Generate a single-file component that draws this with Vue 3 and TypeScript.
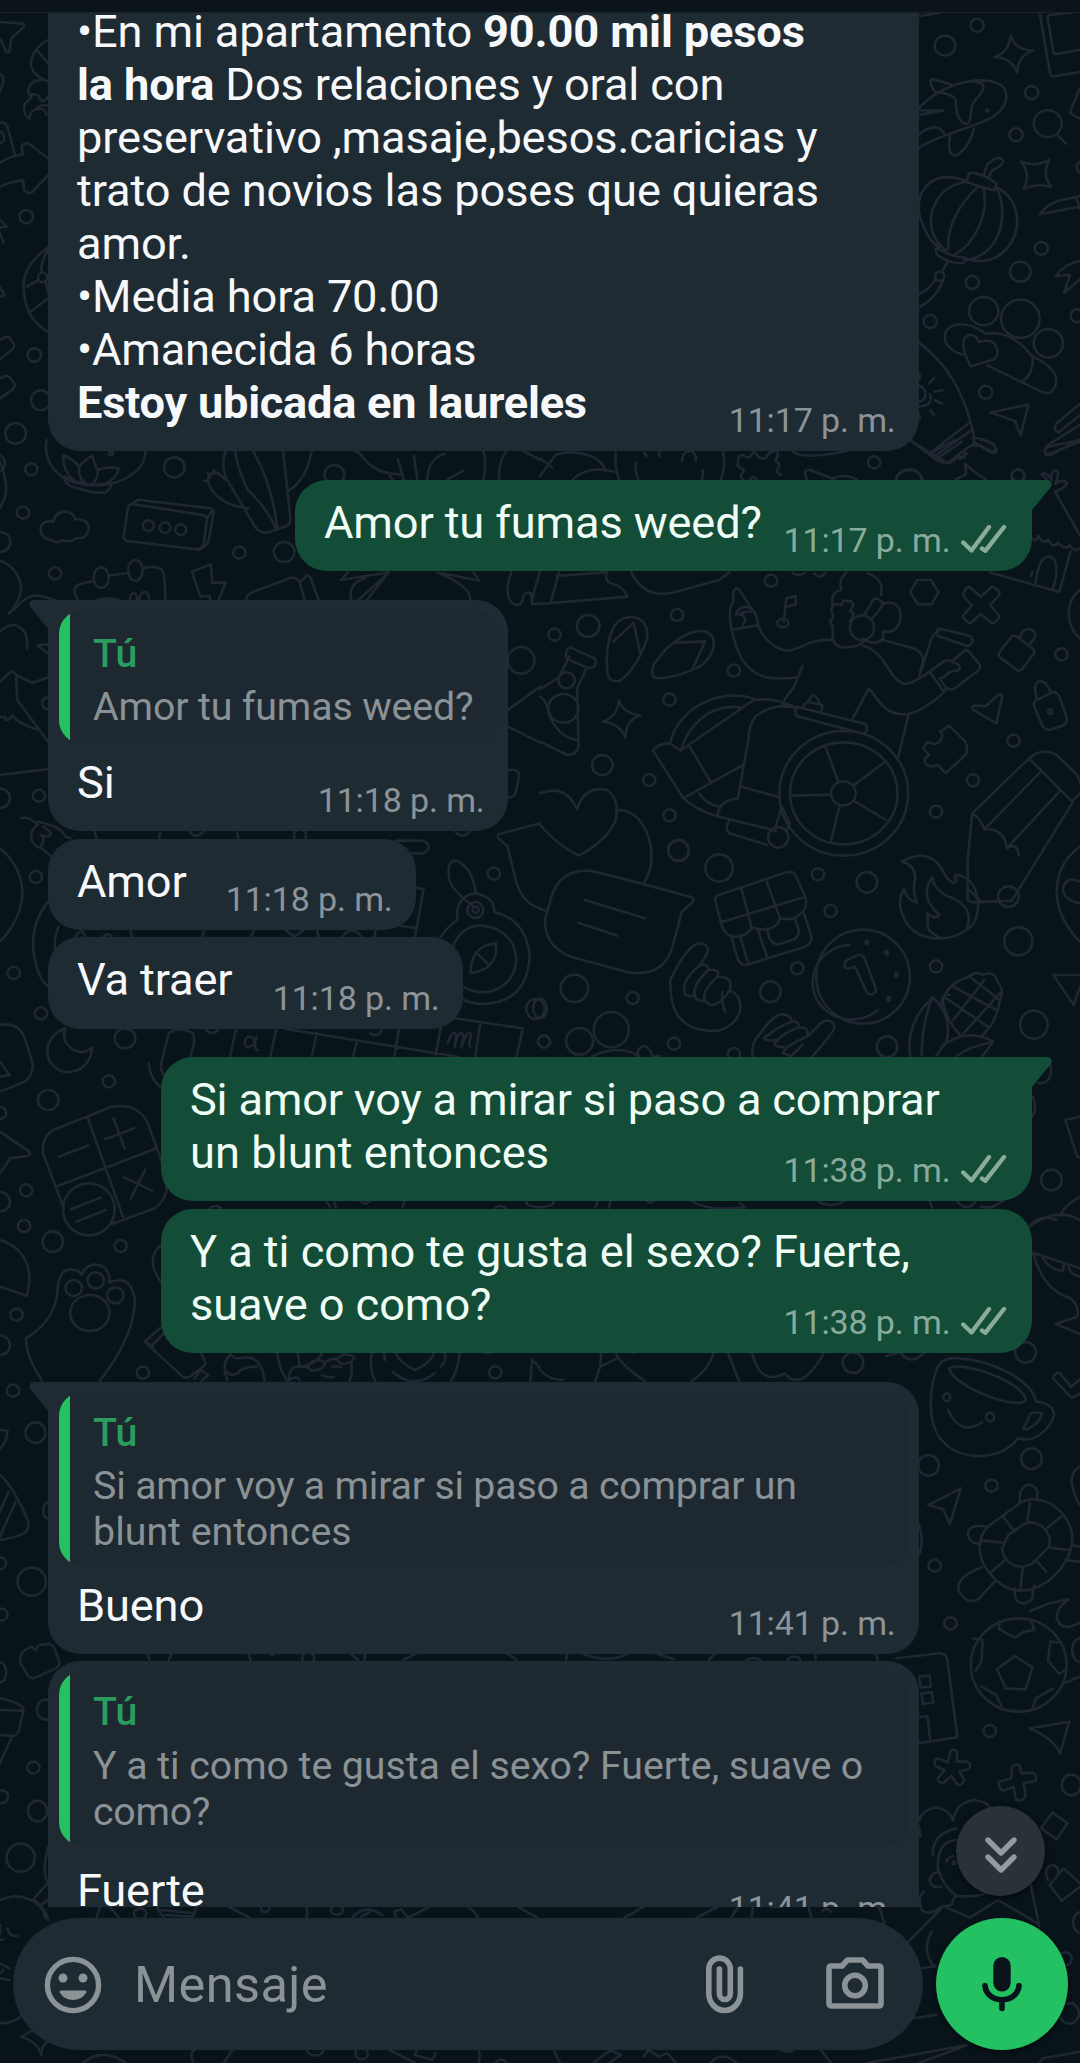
<script setup lang="ts">
interface Line {
  html: string
  spacing: number
}

interface Message {
  id: number
  side: 'in' | 'out'
  lines: Line[]
  time: string
  width: number
  tail?: boolean
  first?: boolean
  quote?: Line[]
  short?: boolean
  low?: boolean
}

interface Doodle {
  transform: string
  paths: string[]
  circles: number[][]
}

const line = (html: string, spacing = -0.14): Line => ({ html, spacing })

const messages: Message[] = [
  {
    id: 1,
    side: 'in',
    first: true,
    width: 871,
    time: '11:17 p. m.',
    lines: [
      line('•En mi apartamento <b>90.00 mil pesos</b>', -0.16),
      line('<b>la hora</b> Dos relaciones y oral con', -0.13),
      line('preservativo ,masaje,besos.caricias y'),
      line('trato de novios las poses que quieras', -0.11),
      line('amor.'),
      line('•Media hora 70.00', -0.16),
      line('•Amanecida 6 horas', -0.22),
      line('<b>Estoy ubicada en laureles</b>', -0.26),
    ],
  },
  { id: 2, side: 'out', tail: true, width: 737, lines: [line('Amor tu fumas weed?')], time: '11:17 p. m.' },
  { id: 3, side: 'in', tail: true, short: true, width: 460, quote: [line('Amor tu fumas weed?')], lines: [line('Si')], time: '11:18 p. m.' },
  { id: 4, side: 'in', width: 368, lines: [line('Amor')], time: '11:18 p. m.' },
  { id: 5, side: 'in', width: 415, lines: [line('Va traer')], time: '11:18 p. m.' },
  {
    id: 6,
    side: 'out',
    tail: true,
    width: 871,
    lines: [line('Si amor voy a mirar si paso a comprar', -0.21), line('un blunt entonces', 0.05)],
    time: '11:38 p. m.',
  },
  {
    id: 7,
    side: 'out',
    width: 871,
    lines: [line('Y a ti como te gusta el sexo? Fuerte,', -0.07), line('suave o como?', -0.08)],
    time: '11:38 p. m.',
  },
  {
    id: 8,
    side: 'in',
    tail: true,
    width: 871,
    quote: [line('Si amor voy a mirar si paso a comprar un', -0.2), line('blunt entonces', 0)],
    lines: [line('Bueno')],
    time: '11:41 p. m.',
  },
  {
    id: 9,
    side: 'in',
    low: true,
    width: 871,
    quote: [line('Y a ti como te gusta el sexo? Fuerte, suave o', -0.06), line('como?', -0.3)],
    lines: [line('Fuerte')],
    time: '11:41 p. m.',
  },
]

const doodles: Doodle[] = [
  {
    transform: 'translate(900 0) scale(.33333 .38265)',
    paths: [
      'M58 42L115 34M418 30L450 190Q452 202 465 199L540 188M540 30L448 40Q442 41 443 48L460 135Q462 143 470 141L540 130',
      'M333 92Q342 130 399 132Q355 145 351 189Q336 152 284 149Q325 138 333 92Z',
      'M58 282C110 230 200 205 262 211C335 218 335 270 280 305C230 332 120 350 58 386M105 240Q80 205 100 207L160 222M105 240Q160 245 168 262C165 310 190 328 205 322C218 310 205 285 225 262Q262 228 245 218Q230 212 222 214M58 288L130 289L58 300M58 350Q110 315 135 352M150 352Q140 410 168 406Q205 390 222 336',
      'M472 352L499 376M540 230L512 288Q510 297 518 300L540 310',
      'M363 422Q408 438 448 417Q424 455 454 488Q410 478 371 494Q394 455 363 422Z',
      'M205 475C80 430 30 520 70 590C85 625 105 640 118 645M290 490C360 520 370 600 320 650C280 690 230 685 195 675M205 475C110 480 70 570 105 620Q115 640 140 655M235 487C180 530 140 590 145 650M250 490C270 560 220 640 165 665M290 492C330 560 300 670 195 680M198 475L208 452Q245 450 290 480L282 497Q240 490 198 475ZM110 648Q105 655 112 667Q150 690 190 688L195 674Q150 670 110 648ZM250 460L262 430Q300 400 310 422Q302 437 276 445L266 464M142 686L126 710M130 732Q110 780 58 802M108 728Q90 755 58 768',
      'M540 512L500 520Q450 525 418 560L540 540M530 520L540 545M540 682Q490 690 468 722L510 718L492 766L540 730',
      'M196 928C150 920 125 895 138 865C160 840 205 842 250 868M255 872C300 865 350 880 395 930C455 955 480 980 465 1010C455 1030 440 1030 420 1022L262 955M398 934Q400 980 365 998M212 957Q195 930 190 905Q190 875 212 875Q232 878 236 894Q270 885 285 900Q302 925 280 940Z',
      'M272 1078L385 1057L362 1137L345 1100Z',
      'M58 896C140 950 190 1020 220 1130L222 1158L150 1205Q135 1213 110 1203L30 1150M88 1185L208 1105M100 1195L218 1122M222 1145Q240 1142 280 1160Q295 1180 285 1183L240 1165L220 1165M172 1192L180 1200L196 1188L192 1180M58 1008Q80 1015 76 1035Q70 1050 58 1048M90 1030Q100 1060 60 1062M88 1002L102 988M104 1024L128 1020M104 1046L126 1054M90 1072L102 1084M60 978L60 990M58 1084L60 1096',
      'M540 1055L468 1108Q460 1125 475 1130L540 1085M540 1110L440 1165Q428 1180 442 1188Q450 1190 458 1186L540 1148',
      'M168 1252L198 1240L196 1212Q215 1230 256 1252',
      'M440 1252Q420 1240 428 1237Q445 1236 455 1255Q450 1230 470 1230Q480 1238 465 1265Q485 1250 502 1262Q495 1275 465 1285L540 1400M396 1408Q410 1418 414 1400Q430 1425 445 1410Q460 1435 475 1418Q495 1440 508 1425Q525 1445 540 1432M512 1440L478 1547L270 1496M406 1530Q415 1450 450 1455Q485 1465 458 1540',
    ],
    circles: [[135,119,31,26],[231,66,20,17],[395,242,20,17],[443,323,42,35],[348,352,20,17],[424,649,20,17],[361,710,31,26],[217,738,20,17],[119,722,14,12],[91,840,20,17],[251,813,44,37],[361,833,58,50],[445,897,44,37],[257,1025,20,17],[354,1244,20,17],[28,1262,42,34],[530,825,18,17],[262,289,3,3],[550,437,20,17]],
  },
  {
    transform: 'translate(0 0) scale(.33333)',
    paths: [
      'M0 66L68 71Q78 77 68 84L34 115L28 155Q20 158 17 152L0 115M145 120Q100 140 92 190Q95 225 145 245M110 150L145 190M137 240Q90 235 84 275Q90 290 98 283Q90 300 75 310Q65 340 88 357Q90 335 105 328Q135 320 140 345M145 290Q130 310 120 298Q118 280 95 282M145 318Q120 310 105 330',
      'M0 222Q15 230 8 250L0 275M0 368Q15 365 22 378L45 466M0 395Q15 400 12 422L0 430',
      'M0 488Q30 468 68 464L65 438Q75 425 90 433L145 476M0 560Q35 543 70 542L72 570Q85 585 98 575L145 525',
      'M0 660L20 680L0 683M0 700L12 728M0 862L14 885L0 890',
      'M145 742Q60 800 72 880Q80 960 145 996M145 750Q120 790 125 815M80 860L113 842M137 845L145 880M92 935L130 905M145 895L130 905',
      'M0 1020L15 1012Q25 1008 32 1018L42 1032Q45 1042 35 1050L0 1078M0 1135L15 1128Q25 1126 32 1136L44 1152Q45 1162 38 1168L0 1195',
    ],
    circles: [[79,650,20,20],[128,832,14,14],[103,1065,20,20],[122,1201,29,30],[47,1300,31,31],[-6,1390,20,25]],
  },
  {
    transform: 'translate(0 440) scale(.34439 .33333)',
    paths: [
      'M135 0C125 60 160 100 195 120C260 145 330 142 380 105C420 80 425 50 423 0M183 45Q210 55 230 80M183 45Q185 100 215 120M230 80Q245 60 268 47Q275 75 284 90Q310 78 345 85Q340 115 308 130M230 80Q225 115 250 130M284 90Q285 115 270 130M188 110L190 125Q200 140 230 146Q270 160 300 158Q315 155 322 138M188 110Q240 140 305 132',
      'M0 65Q25 130 15 170L0 205M25 520L50 500Q80 460 120 468L160 480M0 362Q50 380 62 440Q60 480 28 520M0 575Q30 545 55 560Q85 580 78 625M0 725L33 693Q60 715 95 728L140 712M47 710L50 780L140 905M0 830Q10 835 15 830L18 840Q30 840 35 825Q50 850 105 868M140 613L108 616L140 640M0 1005L140 987',
      'M150 300Q115 295 118 262Q125 240 155 245Q160 215 190 214Q215 220 218 238Q255 235 258 265Q252 300 222 294Q205 310 180 300Q165 315 150 300Z',
      'M372 200Q375 192 385 192L588 225Q605 230 600 245L592 310Q585 330 570 328L370 303Q355 298 360 285L372 200M380 195L400 180Q410 178 425 182L612 205Q622 210 620 222L605 305Q595 325 575 330M600 235L618 212',
      'M655 33Q640 80 660 120L740 260Q755 280 775 278L832 258Q845 250 843 235L822 30M683 33Q690 90 720 150M720 150Q780 210 803 270M735 33Q790 130 805 265M905 33Q890 120 838 152M720 205C650 200 600 150 605 115M605 115Q610 95 625 97Q645 105 655 120M592 122L605 124M603 100L612 112M620 90L622 102',
      'M225 480Q210 450 222 438Q235 428 270 425M315 408L372 398M415 385Q455 375 470 390Q480 400 480 480M378 480Q375 462 390 460Q400 465 398 480M405 480Q405 458 420 455Q435 460 433 480M280 480Q310 470 345 480',
      'M557 395L612 373L616 428L655 428L635 480M557 395L582 470L608 468L610 478M715 480Q715 465 730 458L840 415Q860 408 870 428L885 480M870 428L892 405Q902 410 906 425L925 480M990 420L1130 397M990 420L1010 397M1125 402L1040 480M1020 480Q1010 430 1060 415M1115 415Q1080 460 1065 480M1270 397Q1370 440 1365 480M1285 400L1392 422L1375 397M1485 397Q1465 450 1480 480Q1490 500 1512 493Q1520 480 1520 465Q1530 455 1542 460L1545 492L1568 490M1568 397Q1550 450 1545 485',
      'M1040 38L1030 33M1040 33Q1075 90 1130 100L1170 105M1125 97L1140 118M1155 58L1172 118M1202 48L1212 118M1240 118Q1245 55 1290 42M1300 118L1345 92M1403 33Q1415 70 1403 118M1450 118Q1445 70 1470 33M1520 33L1568 60',
      'M1475 810L1568 740M1475 860L1568 907M1475 990Q1510 985 1507 1010L1497 1060Q1490 1072 1475 1073M60 1135Q80 1125 110 1155M110 1155Q85 1170 92 1200Q105 1225 115 1222Q135 1200 120 1185Q145 1195 148 1180Q135 1165 125 1160M110 1145Q180 1160 190 1190L205 1195M120 1225L150 1250M275 1176L280 1195M465 1176L462 1195M688 1176L692 1195M1150 1202L1225 1202Q1245 1205 1245 1222Q1240 1238 1225 1240L1185 1240M1568 1150L1450 1182Q1440 1188 1450 1198L1475 1220',
    ],
    circles: [[91,88,18,18],[506,82,30,30],[67,218,18,18],[0,306,30,30],[431,257,16,16],[479,263,16,16],[525,269,16,16],[695,338,18,18],[825,336,30,30],[160,400,18,18],[294,413,22,31],[393,391,21,31],[322,40,6,6],[971,104,29,29],[1513,661,39,40],[140,790,18,18],[0,1075,29,29],[113,1067,18,18],[570,1165,22,22],[871,1186,18,18],[1343,1165,22,22]],
  },
  {
    transform: 'translate(540 440) scale(.34439 .33333)',
    paths: [
      'M0 55L35 82M0 108L45 45Q75 33 100 38Q180 45 190 95M95 118Q140 75 215 95M220 33Q215 80 230 118M278 68Q275 95 285 118M473 90Q475 105 470 118M531 33Q540 80 525 118M302 38L310 48M345 33L347 50M412 62Q415 30 440 33Q455 45 452 62',
      'M575 80Q570 45 590 45Q600 55 610 50Q620 30 628 40Q635 60 655 55Q665 30 688 33Q695 50 682 58Q700 75 692 85Q680 95 700 105M575 80Q590 85 592 95Q575 110 590 118M610 118Q620 105 630 118M735 35Q760 60 895 33M775 118Q760 85 785 90L855 118M850 115Q885 100 920 118',
      'M1080 5L1185 70Q1210 60 1220 40M1205 0L1130 43M1225 5L1150 58M1218 50L1230 52L1240 40M1262 8L1310 38Q1325 40 1320 18Q1300 0 1280 0M1568 0L1475 20Q1460 30 1470 45L1568 5',
      'M55 397L32 485M0 492L253 470Q245 440 205 430Q185 420 195 397M48 408L190 397M265 397C290 450 330 470 385 458L520 420L550 397M735 400Q750 410 770 398M795 400Q815 420 830 397',
      'M196 700C190 640 200 590 215 560C240 515 315 520 312 590C300 640 265 700 232 722Q200 728 196 700ZM213 605L272 548L290 635',
      'M328 710Q320 680 340 660C380 600 440 570 475 573C520 585 510 640 470 675C430 700 350 725 328 710ZM395 608L480 604L445 682',
      'M0 748L55 712L85 650M78 655Q70 630 88 622L158 655Q168 670 155 682Q145 690 78 655M135 685L108 745L112 920Q105 945 80 945L0 905M0 770Q20 780 25 820Q50 890 108 900',
      'M229 780Q240 820 291 826Q250 840 248 892Q230 850 183 845Q225 830 229 780Z',
      'M556 570L632 556M556 570Q545 500 560 490L562 455Q570 435 582 455L608 497Q630 520 634 558Q660 620 715 632C760 632 770 595 855 600M558 575C570 630 590 690 650 710Q690 720 748 712M762 678Q750 710 735 745Q710 775 705 792M570 525Q570 505 595 500Q620 505 612 515Q590 515 578 523Q600 525 595 545Q588 550 590 558',
      'M708 545L715 475L742 468L743 492L718 500M850 600L850 560L842 545L852 530L845 510L855 492L875 495L880 482L905 485L910 495L900 515L912 520L900 545M850 500Q840 455 875 450Q865 420 890 397M950 400Q1000 415 990 465M850 600Q860 625 890 622Q920 622 940 605M942 525L970 475Q985 475 998 492L962 540M998 490Q1045 480 1048 530Q1040 580 998 575M995 575Q1005 605 970 608Q945 605 938 595L932 615M940 618C1010 640 1010 720 1060 732Q1080 732 1132 695M995 600L1085 625Q1115 640 1112 660L1102 705M1108 690L1135 600Q1145 575 1158 575',
      'M1155 568Q1148 580 1155 587L1240 618Q1250 618 1257 602Q1255 592 1250 588L1165 567Q1160 566 1155 568ZM1195 665L1232 632Q1240 628 1245 635L1278 675Q1280 685 1272 692L1205 745Q1195 752 1185 745L1170 752L1132 695L1175 662Q1190 658 1215 675Q1225 685 1210 693Q1190 690 1175 710L1160 715L1182 748M1175 755Q1120 810 1070 822C1000 830 985 780 955 745L908 835M1070 825L1038 960',
      'M1095 420L1135 420L1157 456L1137 493L1097 493L1075 456Z',
      'M1232 455Q1235 445 1247 440L1280 470L1312 440Q1325 442 1334 458Q1335 465 1330 470L1307 495L1334 528Q1330 545 1312 550L1280 522L1250 550Q1235 545 1228 528L1255 495Q1220 465 1232 455Z',
      'M1430 397L1425 408M1385 590L1430 625Q1440 632 1433 642L1402 685Q1395 695 1385 690L1335 652Q1328 645 1335 635L1365 595Q1372 582 1385 590ZM1395 590Q1400 565 1425 568Q1445 580 1435 595L1420 615M1332 818L1325 850L1258 810Q1250 800 1260 797L1295 798L1330 765Q1340 760 1342 770Z',
      'M1435 800Q1430 785 1445 778L1488 757Q1500 755 1508 770L1530 835Q1530 850 1520 856L1480 870Q1465 870 1458 855ZM1442 775Q1430 730 1450 724Q1470 720 1482 755',
      'M1568 450Q1535 475 1535 525Q1540 575 1568 595M1188 857L1235 905Q1245 930 1235 945L1178 1000L1155 975Q1135 985 1120 972Q1112 955 1130 945L1113 925L1125 905Q1145 918 1160 905Q1175 885 1162 875Z',
      'M1255 1120L1420 955Q1460 920 1500 945L1555 1000Q1568 1015 1568 1030M1420 955L1545 1085L1568 1060M1255 1120L1242 1255L1242 1380Q1245 1385 1255 1387L1370 1382L1545 1090M1255 1120Q1280 1135 1290 1168L1452 997M1290 1168Q1350 1165 1355 1225L1508 1055M1355 1225Q1385 1205 1390 1245M1242 1345L1280 1385',
      'M0 1060Q75 1030 107 1108Q130 1035 195 1050Q235 1080 218 1145Q190 1205 113 1247Q50 1215 0 1155M225 1110Q300 1110 322 1220Q330 1290 300 1330',
      'M378 910C400 800 530 740 625 778M408 932C430 860 490 790 580 802M620 780Q680 770 740 802L705 792M435 912L620 780M740 802Q670 790 625 830Q605 860 605 900L590 985L575 1075M328 932Q350 905 380 912L408 932L432 915L498 1030M328 932L415 1072Q450 1110 520 1130L685 1172M415 1075L590 975M462 1060Q480 1090 520 1100M515 1130Q520 1080 575 1075M585 1040L695 1072M745 800L945 852Q955 870 942 882L745 828Q738 815 745 800ZM765 798L775 785L820 795L818 812M780 785Q795 745 812 790M685 1158L702 1100L725 1150L715 1175M660 1215L550 1180Q535 1165 548 1145',
      'M828 918L865 1022M998 968L912 1035M1005 1140L915 1085M845 1202L870 1098M728 1067L842 1064',
    ],
    circles: [[970,67,18,18],[1388,106,18,17],[42,584,18,18],[140,558,33,33],[398,525,18,18],[671,422,18,18],[1072,118,36,30],[563,692,18,18],[376,779,18,18],[77,721,24,24],[68,805,44,43],[181,975,30,30],[317,1020,18,18],[376,1126,18,18],[705,549,16,12],[935,563,35,37],[881,1060,36,36],[882,1060,156,153],[882,1060,187,187],[692,1192,29,31],[1375,902,18,18],[1257,1021,18,18],[1150,1115,18,18],[1514,643,18,18],[1482,815,6,7],[402,1232,30,31]],
  },
  {
    transform: 'translate(0 820) scale(.34439 .33333)',
    paths: [
      'M0 85Q65 140 65 225Q60 300 0 365M140 245Q90 310 97 390Q105 470 140 500M170 320Q155 360 160 385M380 331L382 350M592 331L588 350M738 331L728 350M830 331L855 350L880 331M920 331L925 350M1090 331L1088 350M1205 203L1230 207L1205 350M1165 318L1208 325M220 350Q225 335 240 335L248 350M300 350Q310 335 325 350',
      'M1305 180Q1295 120 1325 122Q1370 140 1382 218M1305 180Q1315 215 1380 262M1328 300Q1320 230 1380 220Q1435 230 1435 275Q1530 300 1538 410Q1530 550 1400 552Q1360 550 1340 535M1328 300Q1300 320 1280 350M1315 380Q1340 315 1400 317C1530 330 1530 500 1410 517Q1370 517 1345 500M1440 370C1380 375 1365 420 1367 460C1425 450 1445 420 1440 370ZM1385 400L1420 435M1475 85L1500 190Q1520 250 1568 265',
      'M0 615Q50 605 70 650L95 730Q95 780 60 790L0 815M0 725L28 765L0 770M190 625C120 650 120 740 190 757Q260 755 268 682Q245 705 215 690Q175 665 190 625ZM472 805Q435 780 432 730M475 765Q465 750 468 730L490 640Q520 615 560 640Q570 665 552 710M685 627L668 710M802 627L785 710M830 627L1330 710M920 640L905 710M1038 660L1025 710M1158 627L1145 710M1280 620L1265 705M1395 605L1380 710M1320 595L1518 625L1500 710',
      'M740 660Q715 635 710 670Q715 690 735 675L745 650Q735 690 748 690M1075 640Q1100 655 1110 627M1300 670Q1315 625 1325 645L1320 680Q1335 620 1345 645L1340 680Q1360 620 1368 645Q1360 670 1365 680',
      'M125 1000Q120 950 155 930L320 862Q390 845 425 900L475 1040Q505 1120 450 1165L325 1212M125 1000L185 1165M255 895L357 1190M162 1100L455 985M170 1010L255 977M305 958L390 925M330 895L362 985M360 1072L442 1112M422 1048L380 1135M207 1168L292 1133M222 1205L307 1170M0 935L85 995Q90 1005 80 1008L30 1015L0 1060M948 1143L960 1163M970 1143L975 1163M1175 1143L1168 1163M1045 1143L1060 1152L1075 1143',
    ],
    circles: [[104,171,18,18],[1434,161,18,18],[1380,270,23,24],[1381,269,9,9],[40,459,18,18],[119,580,18,18],[1555,567,27,30],[363,655,30,30],[316,784,18,18],[140,840,30,30],[0,879,18,18],[1022,360,28,28],[258,1168,75,78],[76,1111,18,18],[0,1145,29,29],[70,1218,18,18],[153,1265,30,31],[616,625,18,14],[1580,665,18,18],[626,1172,18,14],[1454,1172,18,14]],
  },
  {
    transform: 'translate(540 820) scale(.34439 .33333)',
    paths: [
      'M35 225Q60 150 140 152Q160 152 440 232Q450 237 445 245L412 275L385 380Q360 470 260 458L95 412Q10 380 15 295ZM130 240L305 295M112 308L225 347M0 268L18 272',
      'M508 240Q508 230 518 225L715 157Q735 152 742 165L770 230L525 307ZM585 205L615 325M658 185L697 295M525 307C540 370 600 355 615 322C650 335 690 330 697 293C740 310 785 270 770 230M555 350L575 420Q585 438 602 434L770 380Q790 370 788 350L765 275M580 345L605 432M632 328L660 412M660 325Q665 375 695 373L740 358Q755 345 750 325L740 295',
      'M380 520L378 480Q430 370 465 370Q495 375 485 400L465 435Q490 430 488 450Q525 445 515 470Q565 470 550 512Q580 520 582 560Q580 610 520 632Q390 640 380 520M465 435Q410 480 420 520Q430 535 450 525Q440 500 488 450M450 525Q450 545 480 542Q465 520 515 470M480 542Q490 560 510 552Q530 545 550 512M530 515Q525 545 538 575',
      'M618 710Q610 670 640 640Q680 580 705 583Q730 585 730 605Q750 600 752 622Q780 620 778 648L820 605Q850 595 855 620Q855 635 790 710M730 605Q690 620 650 655Q660 665 682 660M752 622Q700 640 680 672Q690 685 708 680M778 648Q710 680 705 700L730 708L762 675',
      'M898 375A113 112 0 1 0 980 570M885 440Q880 425 895 418L925 405Q935 402 942 415L975 505Q978 518 965 523Q955 525 948 515L915 440L898 445Q888 448 885 440Z',
      'M1050 125C1110 90 1150 110 1170 155C1195 200 1215 195 1205 165C1280 165 1290 290 1245 325C1190 370 1100 365 1065 310Q1030 250 1057 207Q1065 240 1095 248Q1080 215 1090 170Q1085 130 1050 125ZM1165 355C1110 330 1130 310 1125 280Q1145 300 1160 285C1110 240 1120 200 1138 173Q1150 220 1200 235Q1260 265 1240 322',
      'M1140 532Q1060 610 1075 708M1140 532Q1110 600 1108 705M1140 532Q1200 590 1180 665L1150 708M1170 545Q1180 490 1245 470Q1270 450 1285 465Q1320 450 1328 485Q1350 510 1335 540Q1330 600 1285 645M1170 545Q1180 600 1220 645M1165 555Q1165 520 1190 525M1180 535L1300 620M1200 500L1325 570M1245 468L1335 540M1200 600L1290 480M1230 640L1335 520M1165 680Q1240 620 1315 665Q1300 690 1285 708M1210 708Q1245 680 1315 665',
      'M1568 80Q1500 130 1500 220Q1505 300 1568 365M1568 185Q1530 165 1518 205Q1520 240 1568 250M1568 465L1490 465L1550 555L1568 500M1568 890L1525 900L1560 1010L1568 1012M150 710Q230 670 290 710M285 710Q280 680 305 678Q325 690 325 710M325 710L350 708M1480 732Q1490 760 1475 780Q1460 795 1445 788M1430 830Q1445 860 1430 890',
      'M168 1143L160 1163M205 1143L200 1163M310 1143L320 1148L330 1143M440 1143Q490 1175 590 1163M580 1148L595 1163M1132 1143L1138 1163M1280 1160L1310 1163L1345 1143M1210 1143Q1240 1180 1265 1143',
      'M1420 1220Q1500 1160 1568 1200M1510 1185Q1530 1150 1568 1130',
    ],
    circles: [[402,91,30,31],[520,144,40,41],[807,163,18,18],[949,187,30,31],[844,273,18,18],[100,505,40,41],[269,534,18,18],[207,629,51,53],[115,664,39,40],[0,565,20,29],[11,665,17,18],[389,671,18,18],[747,445,18,18],[669,515,30,31],[938,470,136,141],[1150,439,18,18],[1360,230,30,31],[1389,364,41,42],[1434,614,40,42],[1008,680,30,31],[563,702,18,18],[1485,1080,30,31],[949,367,4,5],[1007,398,4,5],[1035,465,4,5],[1013,537,4,5],[0,1145,40,17],[845,1135,40,20]],
  },
  {
    transform: 'translate(0 1220) scale(.34439 .33333)',
    paths: [
      'M0 60Q90 90 85 190L78 227L0 200M122 482Q75 410 75 355Q165 300 168 200Q175 130 230 155L237 165Q255 120 300 140Q322 160 317 188Q380 160 392 240Q390 350 290 482M467 75Q420 120 467 185M420 365L467 322M420 365L530 470Q545 478 558 465L595 435Q600 425 580 397M440 378L485 330M565 475L583 450L605 465L585 483M420 365L445 380',
      'M660 480Q640 430 670 403Q680 420 705 413Q760 405 768 483M658 455Q670 470 690 460Q700 440 745 440M805 397Q810 450 835 483M865 397L870 440Q925 430 935 397M840 480Q835 440 870 440L890 440M895 440Q910 410 940 425Q950 440 920 450Q895 455 895 440ZM980 415Q1000 395 1028 410Q1030 425 1000 432Q980 432 980 415ZM940 430Q965 410 980 420M935 465Q950 475 970 470M965 440L990 440M1020 430Q1025 460 1015 483M840 480Q860 465 870 480',
      'M1080 397Q1070 440 1090 483M1115 397L1118 420M1148 397Q1160 430 1205 450Q1250 430 1262 397M1140 455Q1200 510 1262 460M1290 397Q1300 420 1280 440M1335 397Q1330 450 1310 483M1540 483L1545 418L1568 445',
      'M0 630L22 632Q20 670 0 685M0 765Q40 800 82 905Q85 925 75 935Q60 950 0 960M0 875L25 815M0 950L45 845',
    ],
    circles: [[350,78,18,18],[48,284,18,18],[0,376,29,29],[214,204,24,24],[278,181,24,24],[335,226,24,24],[261,279,57,54],[415,458,18,18],[38,512,18,18],[103,638,29,31],[140,872,15,24],[0,1030,18,18],[92,1085,41,42],[4,1184,18,18],[1438,457,18,18],[1415,385,22,14]],
  },
  {
    transform: 'translate(540 1220) scale(.34439 .33333)',
    paths: [
      'M0 450Q25 480 68 480M178 397L175 440L160 483M175 440L225 415M220 400Q240 440 305 483M505 397Q490 450 440 483M545 397L578 483M615 397Q640 500 710 460Q760 520 825 397M1005 408L1045 397Q1080 440 1115 397M265 397L275 397',
      'M1432 98Q1460 210 1540 235Q1568 260 1560 290L1497 312L1568 342M1432 98L1568 145M1460 112Q1480 150 1518 153L1522 132M1535 140Q1540 165 1568 170M1420 20Q1450 -20 1500 0',
      'M1155 440Q1170 410 1215 415C1310 420 1430 480 1440 545Q1490 550 1493 585Q1485 620 1450 645Q1420 665 1388 655C1340 720 1230 725 1175 670C1120 620 1130 500 1155 440ZM1187 445C1230 420 1410 490 1410 540C1390 575 1200 500 1187 445ZM1185 570Q1220 650 1283 607M1403 627L1425 580Q1440 575 1458 580Q1450 610 1415 628Z',
      'M1490 475Q1495 455 1510 460L1542 500L1568 478M1490 475L1540 530Q1550 535 1568 520M1222 805L1190 912L1170 868L1128 855Z',
      'M1400 845C1450 825 1500 850 1530 900C1560 950 1545 1010 1500 1060C1440 1125 1360 1130 1310 1065C1270 1020 1265 960 1300 920ZM1360 945L1405 912C1450 895 1490 940 1478 980L1430 1030C1390 1055 1345 1030 1342 985ZM1422 850L1415 908M1345 890L1378 935M1513 890L1472 925M1285 962L1345 968M1540 990L1478 983M1308 1058L1348 1022M1470 1055L1440 1020M1395 1105L1402 1042M1392 845L1395 815Q1418 775 1445 812L1442 840M1300 920Q1240 910 1243 945Q1250 975 1280 970M1283 1042Q1210 1070 1215 1110Q1240 1160 1275 1135L1320 1085M1378 1105Q1375 1150 1405 1150Q1435 1145 1430 1120L1435 1097M1545 975L1568 980M1525 1020L1568 1025M1568 740Q1545 750 1543 785Q1550 830 1568 855M1101 915Q1115 960 1103 1000',
    ],
    circles: [[909,428,30,31],[1410,397,30,31],[1181,532,10,12],[1307,591,12,13],[1427,716,30,31],[1128,736,30,31],[1311,797,18,18],[1146,1037,18,18],[1192,1210,18,18]],
  },
  {
    transform: 'translate(0 1620) scale(.34439 .33333)',
    paths: [
      'M60 130Q55 105 72 90L92 80L103 92L112 75L140 72Q155 75 158 85L172 125Q172 140 162 145L98 175Q85 175 80 165ZM0 235Q70 250 68 272L55 330Q50 348 35 348L0 345M0 270L62 272M35 350L0 430M140 680Q125 740 132 770L138 790L95 840L120 855L138 840',
      'M425 98L435 120M500 98L490 120M720 98L728 120M780 98L790 105L800 98M1015 98L1040 120M1060 98L1058 120M1215 98L1170 120M1470 98L1500 120M290 861L280 893M320 861L345 893M455 861L475 893M470 870L565 880M480 885L560 890M570 861L560 893M665 861L725 893M890 861Q895 880 890 893M1025 890Q1060 850 1110 885M1050 890L1075 875M1150 895L1145 875L1165 868L1185 893L1210 880L1245 861M1360 861Q1380 875 1388 893M1505 861L1560 893',
      'M0 840C60 810 130 850 130 893M100 840Q135 870 140 900M22 925Q25 950 50 948M0 915L0 940M0 960L10 958M0 1030L28 1045M0 1075L28 1080M10 1050L0 1060M0 1210Q40 1210 65 1185M62 1250Q100 1230 108 1215M62 1250Q110 1265 120 1305Q120 1275 140 1265M240 1329Q300 1280 365 1329M560 1329Q550 1295 565 1290M675 1290L650 1329M1130 1290L1205 1329M1390 1290Q1395 1310 1390 1329M1210 1290L1205 1305L1255 1320L1265 1300',
    ],
    circles: [[0,157,18,30],[132,269,25,30],[97,443,18,18],[6,530,17,19],[109,573,28,31],[60,713,41,42],[895,113,18,15],[407,881,18,16],[978,870,18,14],[770,865,12,12],[915,1285,25,22],[1050,1300,18,18],[1455,1337,18,18]],
  },
  {
    transform: 'translate(540 1620) scale(.34439 .33333)',
    paths: [
      'M1335 5L1332 25L1350 38L1380 52L1405 35L1435 30L1425 0M1378 108L1430 142L1410 208L1352 205L1327 148ZM1258 55L1285 60L1282 125L1265 152M1525 150L1508 162L1475 122L1482 65L1512 68M1282 200L1325 225L1340 258M1430 265L1440 235L1490 205',
      'M975 98L980 120M1035 115L1160 100Q1180 100 1183 120L1212 352L1101 370M1101 170L1132 167L1135 200L1105 202ZM1108 220L1138 217L1142 248L1112 252ZM1101 292L1125 288L1133 362M1568 170L1525 188M1505 0Q1510 25 1540 20L1568 8M1500 0Q1500 -40 1535 -62L1480 -50L1425 -28',
      'M1422 325L1537 305L1510 400Q1490 355 1422 325Z',
      'M1190 400Q1198 380 1212 395L1210 425L1240 425Q1255 435 1245 447L1218 455L1232 480Q1225 500 1210 492L1195 468L1172 488Q1155 490 1155 475L1175 450L1148 438Q1140 420 1155 415L1185 428Z',
      'M1370 445Q1375 430 1392 435L1398 460L1430 458Q1445 465 1440 482L1405 490L1410 525Q1405 545 1382 540L1375 500L1345 512Q1330 505 1333 485L1368 475Z',
      'M1488 577L1532 610L1500 658L1455 625ZM1480 795L1520 745L1568 790M1480 795L1515 842L1568 800M1475 780Q1460 740 1490 735Q1510 745 1505 760M1101 600Q1110 570 1150 562Q1190 570 1200 602Q1205 550 1260 540Q1300 545 1305 562M1101 620L1105 650M1140 705Q1140 640 1210 625M1155 745C1155 690 1170 660 1215 660M1155 745Q1170 800 1210 828Q1290 835 1330 800M1155 755Q1130 765 1132 785Q1140 805 1165 800M1180 725Q1185 710 1200 708M1115 815Q1095 830 1108 870Q1130 890 1165 860L1195 855L1205 828M1170 860L1070 965M1180 862L1248 893L1330 840L1445 910M1425 795L1450 920M1138 935Q1105 990 1145 1040M1110 1045L1150 1038M1085 1195L1150 1185M1101 1329L1240 1275L950 1329M1450 1329L1460 1315L1568 1295M815 1290L845 1329M40 1290L58 1329M155 1329L205 1290L235 1305L200 1329M300 1310L315 1290L345 1310L370 1300L395 1329M495 1329Q530 1290 570 1329M700 1290Q720 1300 735 1290M300 861L245 893M515 861L455 893M575 861L555 893M618 861L615 893M780 861L788 893M820 875L830 865L845 875M985 861L1000 910M670 861L700 861M80 98L75 120M115 98Q200 135 260 98M330 98L390 118M510 98L490 120M800 98L800 120',
    ],
    circles: [[1390,135,139,140],[1306,333,18,18],[1543,495,28,31],[1570,90,25,36],[1568,907,20,30],[1525,1017,19,20],[1537,1180,28,31],[1203,728,4,4],[738,120,18,10],[620,125,22,10],[1192,10,18,18]],
  },
]
</script>

<template>
  <div class="screen">
    <svg class="wallpaper" width="1080" height="2063" viewBox="0 0 1080 2063" aria-hidden="true">
      <g v-for="d in doodles" :key="d.transform" :transform="d.transform">
        <path v-for="(p, i) in d.paths" :key="i" :d="p" />
        <ellipse v-for="(c, i) in d.circles" :key="'c' + i" :cx="c[0]" :cy="c[1]" :rx="c[2]" :ry="c[3]" />
      </g>
    </svg>
    <header class="topbar"></header>
    <main class="chat">
      <div
        v-for="m in messages"
        :key="m.id"
        class="bubble"
        :class="[m.side, { tail: m.tail, first: m.first, low: m.low }]"
        :style="{ width: m.width + 'px' }"
      >
        <svg v-if="m.tail" class="nub" width="24" height="32" viewBox="0 0 24 32" aria-hidden="true">
          <path d="M24 0H5C0 0 -1 5 2 8L20 30L24 32Z" />
        </svg>
        <div v-if="m.quote" class="quote" :class="{ short: m.short }">
          <div class="who">Tú</div>
          <div
            v-for="(l, i) in m.quote"
            :key="i"
            class="quoted"
            :style="{ letterSpacing: l.spacing + 'px' }"
            v-html="l.html"
          ></div>
        </div>
        <div class="body">
          <div class="text">
            <div v-for="(l, i) in m.lines" :key="i" :style="{ letterSpacing: l.spacing + 'px' }" v-html="l.html"></div>
          </div>
          <div class="meta">
            <span>{{ m.time }}</span>
            <svg v-if="m.side === 'out'" class="checks" width="46" height="30" viewBox="0 0 46 30" aria-hidden="true">
              <path d="M2.2 18.5L10.5 26.5L28 3M21 24.5L24.3 26.8L43 3" />
            </svg>
          </div>
        </div>
      </div>
    </main>
    <footer class="composer">
      <div class="field">
        <svg class="smile" width="58" height="58" viewBox="0 0 58 58" aria-hidden="true">
          <circle cx="29" cy="29" r="25.6" fill="none" stroke="#8b9397" stroke-width="5.4" />
          <circle cx="19" cy="22" r="4.5" fill="#8b9397" />
          <circle cx="39" cy="22" r="4.5" fill="#8b9397" />
          <path d="M17 34.5H41Q43 34.5 42.2 36.3C37.5 46.5 20.5 46.5 15.8 36.3Q15 34.5 17 34.5Z" fill="#8b9397" />
        </svg>
        <span class="placeholder">Mensaje</span>
        <svg class="clip" width="38" height="60" viewBox="0 0 38 60" aria-hidden="true">
          <path d="M34.4 15V39.5A15.8 17 0 0 1 2.8 39.5V14.5A10.8 11.5 0 0 1 24.3 14.5V39.5A5.4 6 0 0 1 13.4 39.5V15" />
        </svg>
        <svg class="camera" width="58" height="54" viewBox="0 0 58 54" aria-hidden="true">
          <path d="M3 11.5Q3 9 5.5 9H16L21.5 3H36.5L42 9H52.5Q55 9 55 11.5V46.5Q55 49 52.5 49H5.5Q3 49 3 46.5Z" />
          <circle cx="29" cy="28.5" r="10.3" />
        </svg>
      </div>
      <button class="mic" aria-label="Voz">
        <svg width="42" height="56" viewBox="0 0 42 56" aria-hidden="true">
          <rect x="12.3" y="1" width="17.4" height="34.5" rx="8.7" fill="#08141a" />
          <path d="M4 29.5C5.5 48.5 36.5 48.5 38 29.5M21 44V52.5" fill="none" stroke="#08141a" stroke-width="5.6" stroke-linecap="round" />
        </svg>
      </button>
    </footer>
    <button class="jump" aria-label="Bajar">
      <svg width="34" height="38" viewBox="0 0 34 38" aria-hidden="true">
        <path d="M4 4L17 17L30 4M4 21L17 34L30 21" />
      </svg>
    </button>
  </div>
</template>

<style>
html,
body {
  margin: 0;
  background: #08131a;
}
</style>

<style scoped>
.screen {
  position: relative;
  width: 1080px;
  height: 2063px;
  overflow: hidden;
  background: #08131a;
  font-family: Roboto, 'Noto Sans', sans-serif;
  display: flex;
  flex-direction: column;
}
.wallpaper {
  position: absolute;
  inset: 0;
  fill: none;
  stroke: #1f2730;
  stroke-linejoin: round;
  stroke-linecap: round;
}
.wallpaper path,
.wallpaper ellipse {
  stroke-width: 2.6px;
  vector-effect: non-scaling-stroke;
}
.topbar {
  position: relative;
  flex: none;
  box-sizing: border-box;
  height: 13px;
  background: #0b141b;
  border-bottom: 1px solid #1a2229;
}
.chat {
  position: relative;
  flex: none;
  height: 1894px;
  overflow: hidden;
  display: flex;
  flex-direction: column;
  align-items: flex-start;
}
.bubble {
  position: relative;
  flex: none;
  box-sizing: border-box;
  margin: 7.3px 48px 0;
  border-radius: 32px;
  background: #1f2b33;
  color: #f7f8fa;
}
.bubble.out {
  align-self: flex-end;
  background: #144d37;
  color: #f0fdf6;
}
.bubble.tail {
  margin-top: 28.7px;
}
.bubble.in.tail {
  border-top-left-radius: 0;
}
.bubble.out.tail {
  border-top-right-radius: 0;
}
.bubble.first {
  margin-top: -60px;
  padding-top: 36px;
}
.nub {
  position: absolute;
  top: 0;
  left: -19.5px;
  fill: #1f2b33;
}
.out .nub {
  left: auto;
  right: -19.5px;
  transform: scaleX(-1);
  fill: #144d37;
}
.quote {
  margin: 0 10.5px 6.4px;
  position: relative;
  top: 10px;
  box-sizing: border-box;
  height: 174.8px;
  padding: 18px 0 0 34.6px;
  border-radius: 24px;
  background: linear-gradient(90deg, #24c163 11px, #1e2830 11px);
  font-size: 39.3px;
  line-height: 46px;
}
.quote.short {
  height: 134.3px;
  padding-top: 21px;
}
.who {
  color: #2a9c5d;
  font-weight: 500;
  margin-bottom: 7.3px;
}
.quoted {
  color: #8a9296;
  white-space: pre;
}
.body {
  display: flex;
  align-items: flex-end;
  padding: 17px 23.3px 21.3px 29px;
}
.out .body {
  padding-right: 24.7px;
}
.low .body {
  padding-top: 22px;
}
.text {
  flex: 1 1 0;
  min-width: 0;
  white-space: pre;
  font-size: 45.2px;
  line-height: 52.96px;
}
.meta {
  flex: none;
  display: flex;
  align-items: center;
  margin-bottom: -10.3px;
  font-size: 34px;
  line-height: 40px;
  letter-spacing: -0.12px;
  color: #8c9499;
  white-space: nowrap;
}
.out .meta {
  color: #89ab9c;
}
.checks {
  margin: 0 0 2px 10.8px;
  fill: none;
  stroke: #89ab9c;
  stroke-width: 4.4px;
  stroke-linecap: round;
  stroke-linejoin: round;
}
.composer {
  position: relative;
  flex: none;
  display: flex;
  align-items: center;
  gap: 13px;
  margin: 11px 12px 0 13px;
}
.field {
  flex: none;
  box-sizing: border-box;
  width: 910px;
  height: 132px;
  padding: 0 38px 0 31px;
  border-radius: 66px;
  background: #1f2b33;
  display: flex;
  align-items: center;
}
.placeholder {
  flex: 1;
  margin: 2px 0 0 32px;
  font-size: 50.5px;
  line-height: 60px;
  letter-spacing: 0.4px;
  color: #8b9397;
}
.clip,
.camera {
  fill: none;
  stroke: #8b9397;
  stroke-width: 5.6px;
  stroke-linecap: round;
  stroke-linejoin: round;
}
.camera {
  margin-left: 82px;
  margin-right: 1px;
}
.smile {
  margin-top: 2px;
}
.mic {
  flex: none;
  width: 132px;
  height: 132px;
  padding: 0;
  border: 0;
  border-radius: 50%;
  background: #24c163;
  box-shadow: 0 2px 5px rgba(0, 0, 0, 0.5);
  display: flex;
  align-items: center;
  justify-content: center;
}
.jump {
  position: absolute;
  left: 956px;
  top: 1806px;
  width: 89px;
  height: 90px;
  padding: 0;
  border: 0;
  border-radius: 50%;
  background: #283238;
  box-shadow: 0 2px 6px rgba(0, 0, 0, 0.5);
  display: flex;
  align-items: center;
  justify-content: center;
}
.jump svg {
  margin-top: 8px;
  fill: none;
  stroke: #949b9e;
  stroke-width: 5.4px;
  stroke-linecap: round;
  stroke-linejoin: round;
}
</style>
